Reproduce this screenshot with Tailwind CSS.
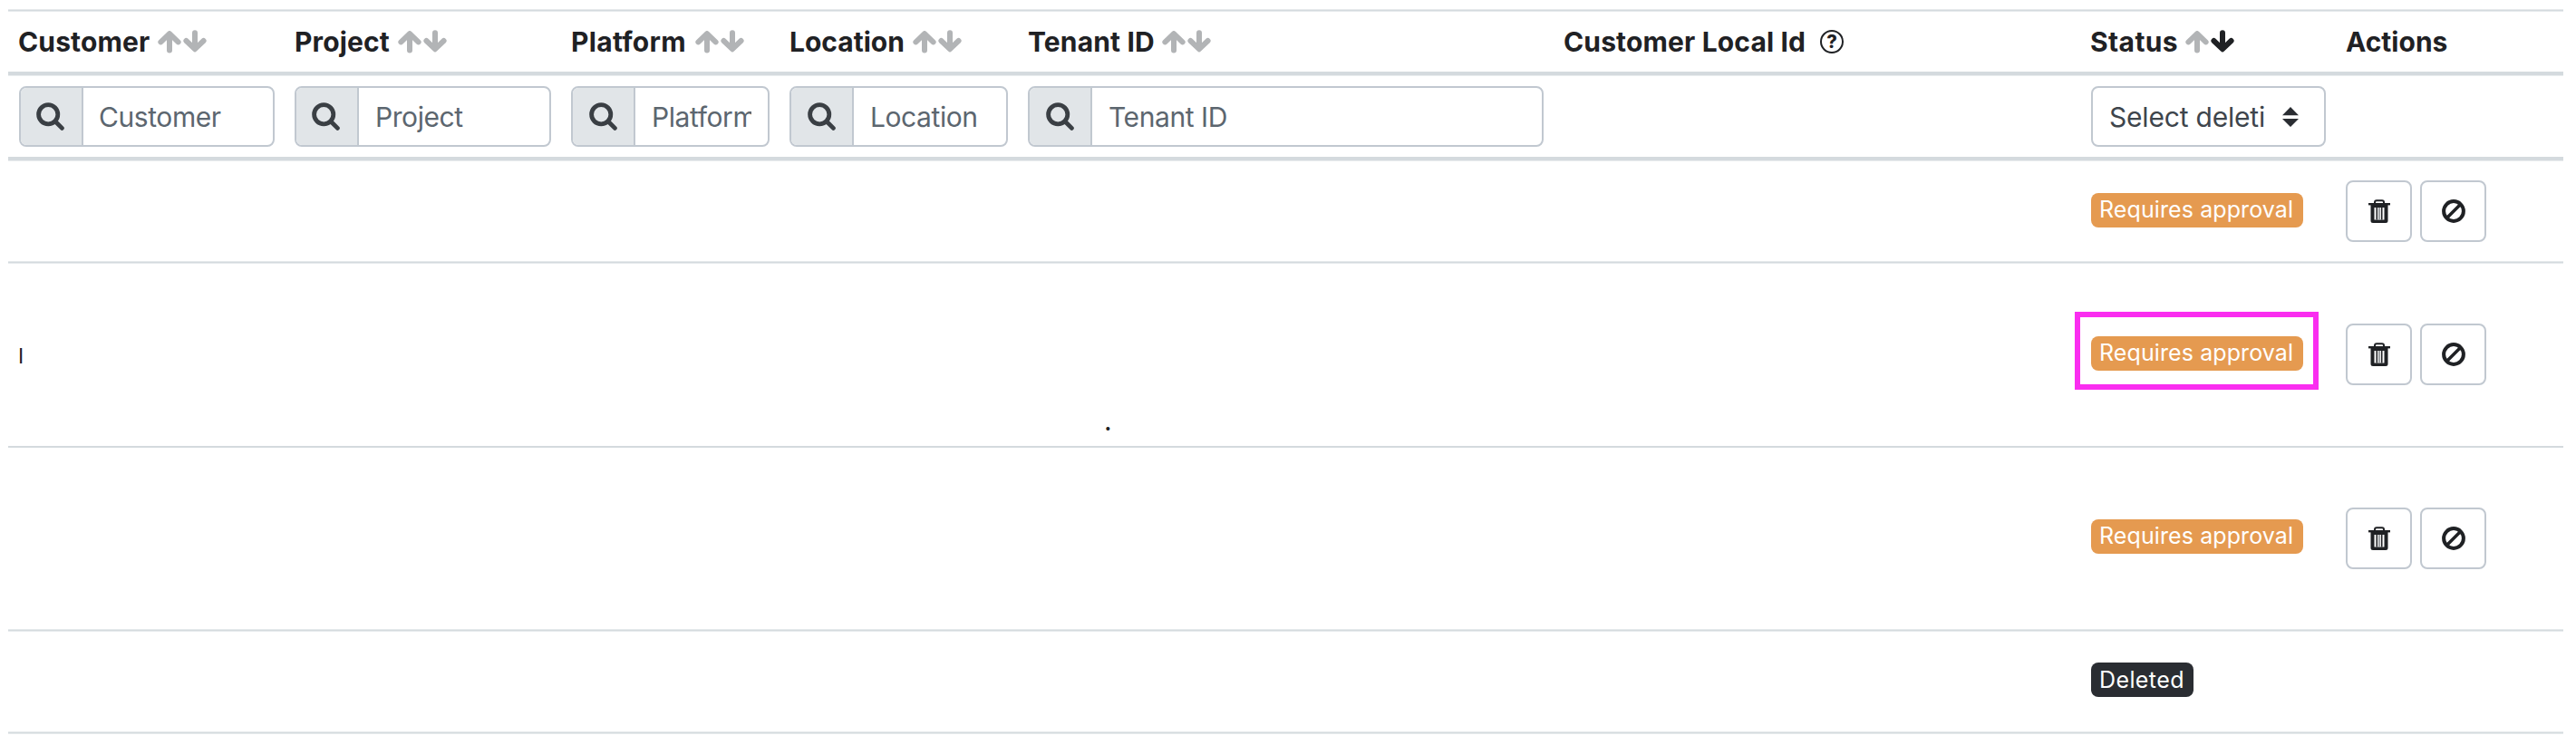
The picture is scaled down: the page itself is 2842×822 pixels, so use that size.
<!DOCTYPE html>
<html lang="en">
<head>
<meta charset="utf-8">
<title>Deletions</title>
<script src="https://cdn.jsdelivr.net/npm/@tailwindcss/browser@4"></script>
</head>
<body class="bg-white font-['Inter',sans-serif] text-[#1f2124] overflow-hidden">
<svg class="hidden">
  <symbol id="up" viewBox="0 0 26 26"><path d="M3.4 13.4 13 4.2l9.6 9.2M13 6v16.6" fill="none" stroke="currentColor" stroke-width="6" stroke-linecap="round" stroke-linejoin="round"/><path d="M13 1 19 8H7z" fill="currentColor"/></symbol>
  <symbol id="down" viewBox="0 0 26 26"><path d="M3.4 12 13 21.2 22.6 12M13 19.400V3.200" fill="none" stroke="currentColor" stroke-width="6" stroke-linecap="round" stroke-linejoin="round"/><path d="M13 24.800 19 18H7z" fill="currentColor"/></symbol>
  <symbol id="search" viewBox="0 0 31 31"><circle cx="13.200" cy="13.200" r="10.600" fill="none" stroke="currentColor" stroke-width="4.800"/><path d="m21 21 7.400 7.400" stroke="currentColor" stroke-width="4.800" stroke-linecap="round"/></symbol>
  <symbol id="trash" viewBox="0 0 24 26"><path d="M0 4h24v2.400H0z" fill="currentColor"/><path d="M7 5V3.200Q7 1.200 9 1.200h6q2 0 2 2V5" fill="none" stroke="currentColor" stroke-width="2"/><path fill-rule="evenodd" d="M2.500 5h19v18.500q0 2.500-2.500 2.500H5q-2.500 0-2.500-2.500zM6.500 9v13.500h11V9z" fill="currentColor"/><path d="M9.300 9v13.500M14.700 9v13.500" stroke="currentColor" stroke-width="1.600"/><path d="M12 9v13.500" stroke="#888c90" stroke-width="1.600"/></symbol>
  <symbol id="ban" viewBox="0 0 26 26"><circle cx="13" cy="13" r="10.900" fill="none" stroke="currentColor" stroke-width="4"/><path d="M5.500 20.500l15-15" stroke="currentColor" stroke-width="3.600"/></symbol>
</svg>

<div class="ml-[9px] w-[2819px] pt-[10px]">
  <div class="h-[3px] bg-[#d4dade] border-y border-[#e6eaec]"></div>

  <!-- Column headings -->
  <div class="grid grid-cols-[304px_305px_241px_263px_592px_581px_282px_251px] h-[66px] items-center text-[30px] leading-none font-bold tracking-[0.15px] whitespace-nowrap">
    <div class="pl-[11px] flex items-center"><span class="w-[154px]">Customer</span><svg class="size-[26px] text-[#b2b4b6]"><use href="#up"/></svg><svg class="size-[26px] ml-[2px] text-[#b2b4b6]"><use href="#down"/></svg></div>
    <div class="pl-[12px] flex items-center"><span class="w-[114px]">Project</span><svg class="size-[26px] text-[#b2b4b6]"><use href="#up"/></svg><svg class="size-[26px] ml-[2px] text-[#b2b4b6]"><use href="#down"/></svg></div>
    <div class="pl-[12px] flex items-center"><span class="w-[137px] tracking-[0.3px]">Platform</span><svg class="size-[26px] text-[#b2b4b6]"><use href="#up"/></svg><svg class="size-[26px] ml-[2px] text-[#b2b4b6]"><use href="#down"/></svg></div>
    <div class="pl-[12px] flex items-center"><span class="w-[136px] tracking-normal">Location</span><svg class="size-[26px] text-[#b2b4b6]"><use href="#up"/></svg><svg class="size-[26px] ml-[2px] text-[#b2b4b6]"><use href="#down"/></svg></div>
    <div class="pl-[12px] flex items-center"><span class="w-[148px]">Tenant ID</span><svg class="size-[26px] text-[#b2b4b6]"><use href="#up"/></svg><svg class="size-[26px] ml-[2px] text-[#b2b4b6]"><use href="#down"/></svg></div>
    <div class="pl-[11px] flex items-center"><span class="w-[283px]">Customer Local Id</span><span class="size-[26px] rounded-full border-[2.5px] border-[#1f2124] flex items-center justify-center text-[20px] font-extrabold tracking-normal">?</span></div>
    <div class="pl-[11px] flex items-center"><span class="w-[105px] tracking-[0.4px]">Status</span><svg class="size-[26px] text-[#b2b4b6]"><use href="#up"/></svg><svg class="size-[26px] ml-[2px]"><use href="#down"/></svg></div>
    <div class="pl-[11px] tracking-normal">Actions</div>
  </div>
  <div class="h-[5px] bg-[#d4dade] border-b border-[#eaedef]"></div>

  <!-- Filters -->
  <div class="grid grid-cols-[304px_305px_241px_263px_592px_581px_282px_251px] h-[89px] pt-[11px] text-[30px] tracking-[-0.42px] text-[#5c666f]">
    <div class="pl-3"><div class="flex w-[282px] h-[67px] border-2 border-[#c1c8d0] rounded-lg overflow-hidden">
      <span class="w-[69px] shrink-0 bg-[#e1e5e8] border-r-2 border-[#c1c8d0] flex items-center pl-[17px] text-[#3a3f44]"><svg class="size-[31px]"><use href="#search"/></svg></span>
      <input class="min-w-0 flex-1 pt-[2px] pl-[17px] pr-[18px] placeholder:text-[#5c666f] placeholder:opacity-100" placeholder="Customer"></div></div>
    <div class="pl-3"><div class="flex w-[283px] h-[67px] border-2 border-[#c1c8d0] rounded-lg overflow-hidden">
      <span class="w-[69px] shrink-0 bg-[#e1e5e8] border-r-2 border-[#c1c8d0] flex items-center pl-[17px] text-[#3a3f44]"><svg class="size-[31px]"><use href="#search"/></svg></span>
      <input class="min-w-0 flex-1 pt-[2px] pl-[18px] pr-[18px] placeholder:text-[#5c666f] placeholder:opacity-100" placeholder="Project"></div></div>
    <div class="pl-3"><div class="flex w-[219px] h-[67px] border-2 border-[#c1c8d0] rounded-lg overflow-hidden">
      <span class="w-[69px] shrink-0 bg-[#e1e5e8] border-r-2 border-[#c1c8d0] flex items-center pl-[18px] text-[#3a3f44]"><svg class="size-[31px]"><use href="#search"/></svg></span>
      <input class="min-w-0 flex-1 pt-[2px] pl-[18px] pr-[18px] placeholder:text-[#5c666f] placeholder:opacity-100" placeholder="Platform"></div></div>
    <div class="pl-3"><div class="flex w-[241px] h-[67px] border-2 border-[#c1c8d0] rounded-lg overflow-hidden">
      <span class="w-[69px] shrink-0 bg-[#e1e5e8] border-r-2 border-[#c1c8d0] flex items-center pl-[18px] text-[#3a3f44]"><svg class="size-[31px]"><use href="#search"/></svg></span>
      <input class="min-w-0 flex-1 pt-[2px] pl-[18px] pr-[18px] placeholder:text-[#5c666f] placeholder:opacity-100" placeholder="Location"></div></div>
    <div class="pl-3"><div class="flex w-[569px] h-[67px] border-2 border-[#c1c8d0] rounded-lg overflow-hidden">
      <span class="w-[69px] shrink-0 bg-[#e1e5e8] border-r-2 border-[#c1c8d0] flex items-center pl-[18px] text-[#3a3f44]"><svg class="size-[31px]"><use href="#search"/></svg></span>
      <input class="min-w-0 flex-1 pt-[2px] pl-[18px] pr-[18px] placeholder:text-[#5c666f] placeholder:opacity-100" placeholder="Tenant ID"></div></div>
    <div></div>
    <div class="pl-3"><div class="flex items-center w-[259px] h-[67px] border-2 border-[#c1c8d0] rounded-lg pl-[18px] text-[#3e454c] tracking-[-0.2px] whitespace-nowrap">
      <span class="w-[191px] pt-[2px]">Select deleti</span>
      <svg class="w-[18px] h-[22px]" viewBox="0 0 18 22"><path d="M9 0l9 9.300H0zM0 13h18l-9 9z" fill="#2a2d32"/></svg></div></div>
    <div></div>
  </div>
  <div class="h-[5px] bg-[#d4dade] border-b border-[#eaedef]"></div>

  <!-- Row 1 -->
  <div class="grid grid-cols-[2286px_282px_251px] h-[110px] items-center">
    <div></div>
    <div class="pl-3 flex pb-[2px]"><span class="w-[234px] h-[38px] rounded-lg bg-[#e59a50] text-white text-[25px] leading-[37px] font-normal tracking-[0.1px] pl-[9px] whitespace-nowrap">Requires approval</span></div>
    <div class="pl-[11px] flex gap-[9px]">
      <button class="w-[73px] h-[68px] border-2 border-[#c1c8d0] rounded-lg flex items-center justify-center"><svg class="w-[24px] h-[26px]"><use href="#trash"/></svg></button>
      <button class="w-[73px] h-[68px] border-2 border-[#c1c8d0] rounded-lg flex items-center justify-center"><svg class="size-[26px]"><use href="#ban"/></svg></button>
    </div>
  </div>
  <div class="h-[3px] bg-[#d4dade] border-y border-[#e6eaec]"></div>

  <!-- Row 2 -->
  <div class="grid grid-cols-[1113px_1173px_282px_251px] h-[201px] items-center">
    <div class="pl-[11px] pt-[4px] text-[23px] leading-none">I</div>
    <div class="self-end pl-[96px] pb-[12px] text-[30px] leading-[32px]">.</div>
    <div class="pl-3 flex pb-[3px]"><div class="relative flex"><span class="w-[234px] h-[38px] rounded-lg bg-[#e59a50] text-white text-[25px] leading-[37px] font-normal tracking-[0.1px] pl-[9px] whitespace-nowrap">Requires approval</span>
      <div class="absolute -left-[18px] -top-[27px] w-[269px] h-[86px] border-[6px] border-[#fa2df0]"></div></div></div>
    <div class="pl-[11px] pb-[1px] flex gap-[9px]">
      <button class="w-[73px] h-[68px] border-2 border-[#c1c8d0] rounded-lg flex items-center justify-center"><svg class="w-[24px] h-[26px]"><use href="#trash"/></svg></button>
      <button class="w-[73px] h-[68px] border-2 border-[#c1c8d0] rounded-lg flex items-center justify-center"><svg class="size-[26px]"><use href="#ban"/></svg></button>
    </div>
  </div>
  <div class="h-[2px] bg-[#d4dade]"></div>

  <!-- Row 3 -->
  <div class="grid grid-cols-[2286px_282px_251px] h-[200px] items-center">
    <div></div>
    <div class="pl-3 flex pb-[4px]"><span class="w-[234px] h-[38px] rounded-lg bg-[#e59a50] text-white text-[25px] leading-[37px] font-normal tracking-[0.1px] pl-[9px] whitespace-nowrap">Requires approval</span></div>
    <div class="pl-[11px] flex gap-[9px]">
      <button class="w-[73px] h-[68px] border-2 border-[#c1c8d0] rounded-lg flex items-center justify-center"><svg class="w-[24px] h-[26px]"><use href="#trash"/></svg></button>
      <button class="w-[73px] h-[68px] border-2 border-[#c1c8d0] rounded-lg flex items-center justify-center"><svg class="size-[26px]"><use href="#ban"/></svg></button>
    </div>
  </div>
  <div class="h-[3px] bg-[#d4dade] border-y border-[#e6eaec]"></div>

  <!-- Row 4 -->
  <div class="grid grid-cols-[2286px_533px] h-[110px] items-center">
    <div></div>
    <div class="pl-3 flex pb-[4px]"><span class="w-[113px] h-[38px] rounded-lg bg-[#2a2d32] text-white text-[25px] leading-[38px] font-normal tracking-[0.4px] pl-[9px] whitespace-nowrap">Deleted</span></div>
  </div>
  <div class="h-[3px] bg-[#d4dade] border-y border-[#e6eaec]"></div>
</div>
</body>
</html>
